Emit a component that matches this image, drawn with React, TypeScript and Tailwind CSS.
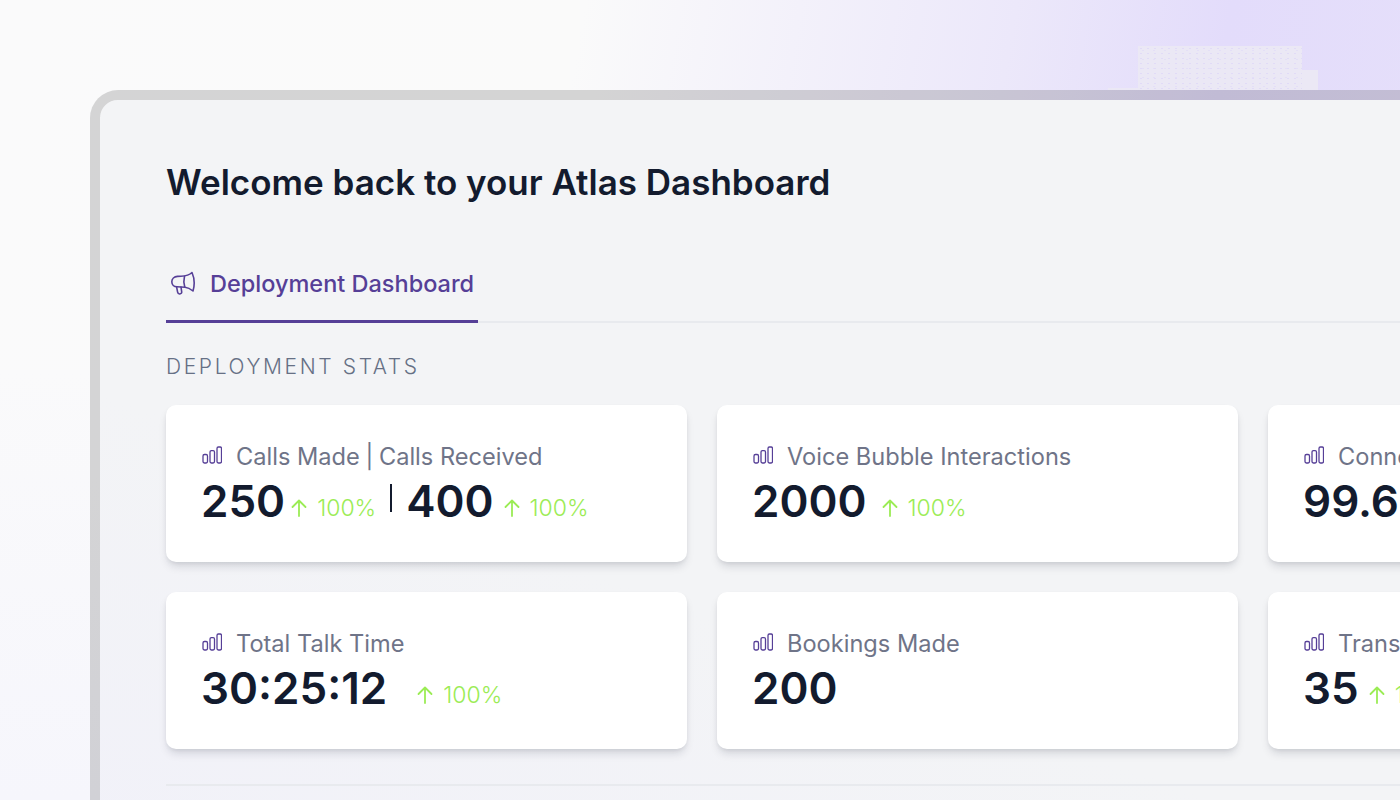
import React from 'react';

const BarsIcon = () => (
  <svg width="20" height="18" viewBox="0 0 20 18" fill="none" stroke="#563f97" strokeWidth="1.3" className="shrink-0 -translate-y-[2px]">
    <rect x="1" y="8.5" width="4.5" height="8.5" rx="1.4" />
    <rect x="8" y="4.7" width="4.5" height="12.3" rx="1.4" />
    <rect x="15" y="1" width="4.5" height="16" rx="1.4" />
  </svg>
);

const MegaphoneIcon = () => (
  <svg width="26" height="25" viewBox="0 0 26 25" fill="none" stroke="#563f97" strokeWidth="1.6" strokeLinejoin="round" strokeLinecap="round" className="shrink-0">
    <path d="M22 1.5 C19.5 4 15.5 5 11 5.2 L7.5 5.4 C4.2 5.6 1.8 8 1.8 10.8 C1.8 13.7 4 15.8 7 15.8 L15 16.2 C18.2 16.5 20.6 18 23 20 C24.6 14.5 24.4 7 22 1.5 Z" />
    <path d="M14.5 5.2 C13.6 8.8 13.6 12.6 14.8 16.2" />
    <path d="M6.6 15.8 L7.6 21.2 C8 23.8 12 23.4 11.7 20.8 L11 16" />
  </svg>
);

const Trend = ({ className = '' }: { className?: string }) => (
  <span className={`flex translate-y-[7px] items-center gap-[10px] text-[23px] font-light text-[#9bec55] ${className}`}>
    <svg width="16" height="18" viewBox="0 0 16 18" fill="none" stroke="#9bec55" strokeWidth="1.8" strokeLinecap="round" strokeLinejoin="round">
      <path d="M8 17V1.5M1.5 8 8 1.5 14.5 8" />
    </svg>
    100%
  </span>
);

const Value = ({ children }: { children: React.ReactNode }) => (
  <span className="text-[44px] leading-[52px] font-semibold text-[#131b2e]">{children}</span>
);

const StatCard = ({ label, children }: { label: React.ReactNode; children: React.ReactNode }) => (
  <div className="h-[157px] overflow-hidden rounded-[10px] bg-white pl-[36px] pt-[37px] shadow-[0_6px_10px_-2px_rgba(16,24,40,0.14),0_2px_4px_-1px_rgba(16,24,40,0.08)]">
    <div className="flex h-[30px] items-center gap-[14px] whitespace-nowrap">
      <BarsIcon />
      <span className="text-[23.6px] text-[#6f7488]">{label}</span>
    </div>
    <div className="-ml-px flex h-[58px] items-center whitespace-nowrap">{children}</div>
  </div>
);

export default function App() {
  return (
    <div
      className="relative h-[800px] w-[1400px] overflow-hidden bg-[linear-gradient(100deg,#fafafb_0%,#fafafa_38%,#ece8fa_66%,#e3dcfb_80%,#e6e0fa_100%)] pl-[90px] pt-[90px]"
      style={{ fontFamily: 'Inter, "Noto Sans", sans-serif' }}
    >
      {/* tint on the lower left of the page */}
      <div className="absolute bottom-0 left-0 h-[430px] w-[100px] bg-[linear-gradient(180deg,#fafafb_0%,#f6f6fc_100%)]" />

      {/* noise patch behind the frame */}
      <div className="absolute left-[1138px] top-[46px] h-[44px] w-[164px] bg-[#ebe8f5] bg-[radial-gradient(#e1dbf7_1px,transparent_1px),radial-gradient(#e4dff7_1px,transparent_1px)] bg-[length:7px_5px,11px_9px]" />
      <div className="absolute left-[1302px] top-[70px] h-[20px] w-[16px] bg-[#ebe8f5]" />
      <div className="absolute left-[1108px] top-[88px] h-[2px] w-[30px] bg-[#ebe8f5]" />

      <div className="relative h-[800px] w-[1400px] rounded-tl-[28px] border-[10px] border-black/15 bg-[linear-gradient(20deg,#f1f1f9_0%,#f3f4f6_38%)] bg-clip-padding">
        <div className="pl-[66px] pt-[60px]">
          <h1 className="text-[35px] leading-[44px] font-semibold text-[#131b2e]">Welcome back to your Atlas Dashboard</h1>

          {/* Tabs */}
          <div className="mt-[51px] flex h-[68px] border-b-2 border-[#e8eaee]">
            <div className="flex h-[68px] w-[312px] items-center gap-[14px] border-b-[3px] border-[#563f97] pb-[8px] pl-[4px]">
              <MegaphoneIcon />
              <span className="text-[23.5px] font-[450] text-[#563f97]">Deployment Dashboard</span>
            </div>
          </div>

          <div className="mt-[28px] h-[32px] text-[21px] font-light tracking-[0.125em] text-[#667085]">DEPLOYMENT STATS</div>

          {/* Stat cards */}
          <div className="mt-[22px] grid w-[1640px] grid-cols-[521px_521px_522px] gap-x-[30px] gap-y-[30px]">
            <StatCard
              label={
                <>
                  Calls Made <span className="mx-[-1px] text-[#6f7488]">|</span> Calls Received
                </>
              }
            >
              <Value>250</Value>
              <Trend className="ml-[6px]" />
              <span className="mx-[14px] h-[28px] w-[2px] -translate-y-[3px] bg-[#131b2e]" />
              <Value>400</Value>
              <Trend className="ml-[10px]" />
            </StatCard>
            <StatCard label="Voice Bubble Interactions">
              <Value>2000</Value>
              <Trend className="ml-[15px]" />
            </StatCard>
            <StatCard label="Connection Rate">
              <Value>99.6%</Value>
            </StatCard>

            <StatCard label="Total Talk Time">
              <Value>30:25:12</Value>
              <Trend className="ml-[30px]" />
            </StatCard>
            <StatCard label="Bookings Made">
              <Value>200</Value>
            </StatCard>
            <StatCard label="Transfers">
              <Value>35</Value>
              <Trend className="ml-[10px]" />
            </StatCard>
          </div>

          <div className="mt-[35px] h-[2px] bg-[#e8eaee]" />
        </div>
      </div>
    </div>
  );
}
